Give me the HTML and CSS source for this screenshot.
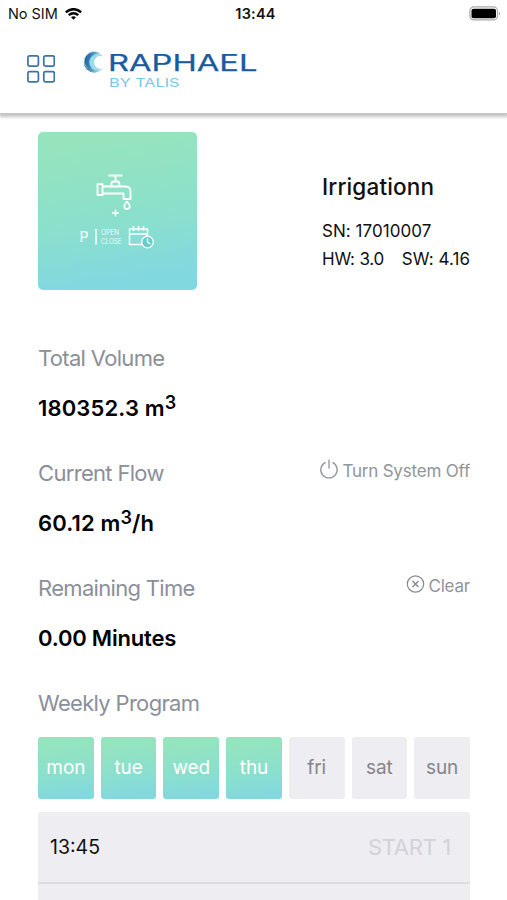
FILE: index.html
```html
<!DOCTYPE html>
<html lang="en">
<head>
<meta charset="utf-8">
<title>Irrigation controller</title>
<link rel="stylesheet" href="styles.css">
</head>
<body>
<header class="top">
  <div class="status">
    <div class="carrier"><span>No SIM</span>
      <svg width="17" height="12" viewBox="0 0 17 12" fill="none" stroke="#050505" stroke-width="2.400"><path d="M.8 4.300Q8.500-2 16.200 4.300M3.700 7.200Q8.500 3.200 13.300 7.200"/><path d="M6 9.200Q8.500 7.400 11 9.200L8.500 11.800Z" fill="#050505" stroke="none"/></svg>
    </div>
    <div class="clock">13:44</div>
    <svg class="battery" width="32" height="15" viewBox="0 0 32 15"><rect x=".9" y=".9" width="27.6" height="13" rx="4" fill="#fff" stroke="#aaa" stroke-width="1.2"/><rect x="2.500" y="2.700" width="24.500" height="9.500" rx="2" fill="#000"/><path d="M30 5.400Q32 7.400 30 9.400Z" fill="#999"/></svg>
  </div>
  <div class="brandbar">
    <svg class="menu" width="28" height="28" viewBox="0 0 28 28" fill="none" stroke="#3973ab" stroke-width="1.700"><rect x=".9" y=".9" width="10.500" height="10.200" rx="1.600"/><rect x="16.800" y=".9" width="10.500" height="10.200" rx="1.600"/><rect x=".9" y="16.600" width="10.500" height="10.200" rx="1.600"/><rect x="16.800" y="16.600" width="10.500" height="10.200" rx="1.600"/></svg>
    <svg class="logo" width="184" height="42" viewBox="0 0 184 42">
      <defs><linearGradient id="moon" x1="0" y1="0" x2="1" y2=".2"><stop offset="0" stop-color="#1c5591"/><stop offset=".4" stop-color="#387fb0"/><stop offset="1" stop-color="#9bddea"/></linearGradient></defs>
      <path d="M20.500 4.800A10.400 10.400 0 1 0 20.500 19.700A8 8 0 1 1 20.500 4.800Z" fill="url(#moon)" transform="translate(-1 0)"/>
      <path d="M21.500 6.300A8.400 8.400 0 1 0 21.500 18.300A6.600 6.600 0 1 1 21.500 6.300Z" fill="#9bdcea"/>
      <path d="M17.500 3.300A9.300 9.300 0 0 0 6 18.500" fill="none" stroke="#b2dce8" stroke-width=".7"/>
      <text class="logo-name" x="26" y="20.800" textLength="149.500" lengthAdjust="spacingAndGlyphs">RAPHAEL</text>
      <text class="logo-sub" x="27" y="36.800" textLength="70.500" lengthAdjust="spacingAndGlyphs">BY TALIS</text>
    </svg>
  </div>
</header>
<main>
  <section class="device">
    <div class="tile">
      <svg width="159" height="159" viewBox="0 0 159 159" fill="none" stroke="#fff" stroke-width="1.800" stroke-linejoin="round">
        <path d="M70.500 43.500H84.500M77.500 43.500V49.500M73.500 54V52Q73.500 49.500 76 49.500H79Q81.500 49.500 81.500 52V54M59.500 52H64.500V63H59.500ZM64.500 54.500H87Q92.500 54.500 92.500 59.500V67H85.500V61.500H64.500"/>
        <path d="M89 69.500Q86.200 73 86.200 74.300A2.800 2.800 0 0 0 91.800 74.300Q91.800 73 89 69.500Z" stroke-width="1.600"/>
        <path d="M77.500 77.500V84.500M74 81H81" stroke-width="1.600"/>
        <path d="M58 97V112.500" stroke-width="1.500"/>
        <path d="M104 112.500H91.500V97H109.500V104M91.500 102H109.500M95.500 94V99M100.500 94V99M105.500 94V99" stroke-width="1.500"/>
        <circle cx="109.500" cy="110" r="5.800" fill="#6accc8" stroke-width="1.300"/><path d="M109.500 106V110.300L112.500 112" stroke-width="1.300"/>
        <g fill="#fff" stroke="none"><text class="p" x="41.500" y="110">P</text><text class="tiny" x="63" y="103" textLength="18" lengthAdjust="spacingAndGlyphs">OPEN</text><text class="tiny" x="63" y="111.500" textLength="20.500" lengthAdjust="spacingAndGlyphs">CLOSE</text></g>
      </svg>
    </div>
    <div class="info">
      <h1>Irrigationn</h1>
      <p class="sn">SN: 17010007</p>
      <p class="versions"><span>HW: 3.0</span><span class="sw">SW: 4.16</span></p>
    </div>
  </section>
  <section class="metric">
    <div class="row"><h2>Total Volume</h2></div>
    <p class="value wide">180352.3 m<sup>3</sup></p>
  </section>
  <section class="metric">
    <div class="row"><h2>Current Flow</h2>
      <div class="action"><svg width="20" height="20" viewBox="0 0 20 20" fill="none" stroke="#92949b" stroke-width="1.300"><path d="M6.500 3.300A8.200 8.200 0 1 0 13.500 3.300M10 .5V9.500"/></svg><span>Turn System Off</span></div></div>
    <p class="value wide">60.12 m<sup>3</sup>/h</p>
  </section>
  <section class="metric">
    <div class="row"><h2>Remaining Time</h2>
      <div class="action"><svg width="20" height="20" viewBox="0 0 20 20" fill="none" stroke="#888a92" stroke-width="1.200"><circle cx="10.500" cy="10" r="8.200"/><path d="M7.500 7L13.500 13M13.500 7L7.500 13" stroke-width="1.500"/></svg><span>Clear</span></div></div>
    <p class="value">0.00 Minutes</p>
  </section>
  <section class="weekly">
    <h2>Weekly Program</h2>
    <div class="days"><span class="day on">mon</span><span class="day on">tue</span><span class="day on">wed</span><span class="day on">thu</span><span class="day">fri</span><span class="day">sat</span><span class="day">sun</span></div>
    <div class="times"><div class="slot"><span>13:45</span><span class="start">START 1</span></div><div class="slot next"></div></div>
  </section>
</main>
</body>
</html>
```

FILE: styles.css
```css
* { box-sizing: border-box; }
html, body { margin: 0; height: 900px; overflow: hidden; }
body { background: #fff; color: #101010; font-family: Inter, "Liberation Sans", sans-serif; }
svg { display: block; flex: none; }
h1, h2, p { margin: 0; font-weight: 400; white-space: nowrap; }
.top { height: 113px; background: #fff; box-shadow: 0 3px 3px 1px #c4c4c4; }
.status { height: 27px; display: grid; grid-template-columns: 1fr auto 1fr; padding: 0 6px 0 8px; align-items: center; }
.carrier { display: flex; gap: 7px; align-items: center; font-size: 14.5px; letter-spacing: -.05px; }
.clock { padding-left: 2px; font-size: 14.5px; font-weight: 600; letter-spacing: .2px; }
.battery { justify-self: end; }
.brandbar { display: flex; align-items: flex-start; padding: 23px 20px 0 27px; gap: 27px; }
.menu { margin-top: 5px; }
.logo { overflow: visible; }
.logo-name { font-family: Inter, sans-serif; font-size: 22.5px; font-weight: 400; fill: #195ba0; stroke: #195ba0; stroke-width: .25px; }
.logo-sub { font-family: Inter, sans-serif; font-size: 11.5px; fill: #72c9e9; }
main { padding: 18.500px 37px 0 38px; }
.device { display: flex; justify-content: space-between; height: 210px; }
.tile { width: 159px; height: 158.500px; border-radius: 5px; overflow: hidden; background: linear-gradient(172deg, #96e4be 10%, #8be0cc 55%, #82d8df 88%); }
.p { font-size: 14px; }
.tiny { font-size: 7px; opacity: .85; }
.info { width: 148px; padding-top: 40px; }
h1 { font-size: 22.5px; line-height: 30px; font-weight: 500; letter-spacing: .15px; }
.sn { margin-top: 15px; font-size: 17px; line-height: 28px; letter-spacing: .05px; }
.versions { display: flex; justify-content: space-between; font-size: 17px; line-height: 28px; letter-spacing: -.2px; }
.sw { letter-spacing: .05px; }
.metric { height: 115px; }
.row { display: flex; justify-content: space-between; height: 34px; }
h2 { font-size: 22px; line-height: 33px; color: #8b8f9a; letter-spacing: -.68px; }
.action { display: flex; align-items: center; height: 28px; gap: 3px; font-size: 17px; color: #92949b; white-space: nowrap; letter-spacing: -.2px; }
.action svg { margin-top: -4px; }
.value { margin-top: 15px; font-size: 22px; line-height: 34px; font-weight: 600; color: #000; letter-spacing: -.2px; }
.wide { letter-spacing: .15px; }
sup { font-size: 18px; line-height: 0; vertical-align: 7px; }
.days { display: grid; grid-template-columns: repeat(7, 1fr); gap: 7px; margin-top: 17px; }
.day { height: 62.500px; border-radius: 3px; display: flex; align-items: center; justify-content: center; background: #eeedf2; color: #85858a; font-size: 19px; letter-spacing: -.1px; }
.day.on { color: #fff; background: linear-gradient(172deg, #96e4be 10%, #8be0cc 55%, #82d8df 92%); }
.times { margin-top: 12.500px; border-radius: 3px 3px 0 0; background: #eeedf2; }
.slot { height: 72px; border-bottom: 2px solid #dddde1; display: flex; justify-content: space-between; align-items: center; padding: 0 19px 0 12px; font-size: 19.5px; }
.slot.next { height: 17px; border: 0; }
.start { color: #d2d2d7; font-size: 22px; letter-spacing: -.3px; }
```
